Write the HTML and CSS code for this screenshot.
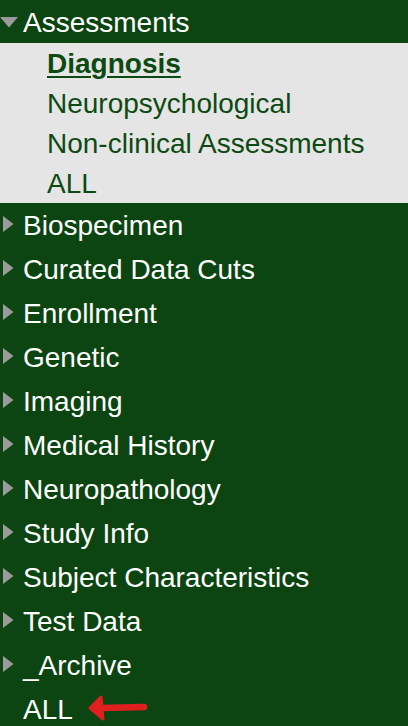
FILE: index.html
```html
<!DOCTYPE html>
<html lang="en">
<head>
<meta charset="utf-8">
<title>Tree</title>
<link rel="stylesheet" href="styles.css">
</head>
<body>
<ul class="tree">
  <li class="node open">
    <div class="row head">
      <span class="caret"><svg width="18" height="11" viewBox="0 0 18 11"><polygon points="0,0 18,0 9,10.5" fill="#9b9b9b"/></svg></span>
      <span class="label">Assessments</span>
    </div>
    <ul class="children">
      <li class="sub"><a class="active">Diagnosis</a></li>
      <li class="sub">Neuropsychological</li>
      <li class="sub">Non-clinical Assessments</li>
      <li class="sub">ALL</li>
    </ul>
  </li>
  <li class="node"><div class="row"><span class="caret"><svg width="11" height="16" viewBox="0 0 11 16"><polygon points="0,0 10.5,8 0,16" fill="#9b9b9b"/></svg></span><span class="label">Biospecimen</span></div></li>
  <li class="node"><div class="row"><span class="caret"><svg width="11" height="16" viewBox="0 0 11 16"><polygon points="0,0 10.5,8 0,16" fill="#9b9b9b"/></svg></span><span class="label">Curated Data Cuts</span></div></li>
  <li class="node"><div class="row"><span class="caret"><svg width="11" height="16" viewBox="0 0 11 16"><polygon points="0,0 10.5,8 0,16" fill="#9b9b9b"/></svg></span><span class="label">Enrollment</span></div></li>
  <li class="node"><div class="row"><span class="caret"><svg width="11" height="16" viewBox="0 0 11 16"><polygon points="0,0 10.5,8 0,16" fill="#9b9b9b"/></svg></span><span class="label">Genetic</span></div></li>
  <li class="node"><div class="row"><span class="caret"><svg width="11" height="16" viewBox="0 0 11 16"><polygon points="0,0 10.5,8 0,16" fill="#9b9b9b"/></svg></span><span class="label">Imaging</span></div></li>
  <li class="node"><div class="row"><span class="caret"><svg width="11" height="16" viewBox="0 0 11 16"><polygon points="0,0 10.5,8 0,16" fill="#9b9b9b"/></svg></span><span class="label">Medical History</span></div></li>
  <li class="node"><div class="row"><span class="caret"><svg width="11" height="16" viewBox="0 0 11 16"><polygon points="0,0 10.5,8 0,16" fill="#9b9b9b"/></svg></span><span class="label">Neuropathology</span></div></li>
  <li class="node"><div class="row"><span class="caret"><svg width="11" height="16" viewBox="0 0 11 16"><polygon points="0,0 10.5,8 0,16" fill="#9b9b9b"/></svg></span><span class="label">Study Info</span></div></li>
  <li class="node"><div class="row"><span class="caret"><svg width="11" height="16" viewBox="0 0 11 16"><polygon points="0,0 10.5,8 0,16" fill="#9b9b9b"/></svg></span><span class="label">Subject Characteristics</span></div></li>
  <li class="node"><div class="row"><span class="caret"><svg width="11" height="16" viewBox="0 0 11 16"><polygon points="0,0 10.5,8 0,16" fill="#9b9b9b"/></svg></span><span class="label">Test Data</span></div></li>
  <li class="node"><div class="row"><span class="caret"><svg width="11" height="16" viewBox="0 0 11 16"><polygon points="0,0 10.5,8 0,16" fill="#9b9b9b"/></svg></span><span class="label">_Archive</span></div></li>
  <li class="node"><div class="row"><span class="caret"></span><span class="label">ALL</span>
    <svg class="pointer" width="62" height="28" viewBox="0 0 62 28"><line x1="14" y1="14" x2="57" y2="13" stroke="#e0201e" stroke-width="6.5" stroke-linecap="round"/><polygon points="3,14 14,3 16,25" fill="#e0201e" stroke="#e0201e" stroke-width="3" stroke-linejoin="round"/></svg>
  </div></li>
</ul>
</body>
</html>
```

FILE: styles.css
```css
html, body {
  margin: 0;
  padding: 0;
  background: #0c4511;
}
body {
  font-family: "Liberation Sans", Arial, sans-serif;
  font-size: 28px;
  color: #ffffff;
}
.tree, .children {
  list-style: none;
  margin: 0;
  padding: 0;
}
.row {
  display: flex;
  align-items: center;
  height: 44px;
  white-space: nowrap;
}
.row.head {
  height: 43px;
}
.caret {
  width: 23px;
  flex: none;
  display: flex;
  align-items: center;
  padding-left: 3px;
  box-sizing: border-box;
  margin-top: -2px;
}
.head .caret {
  padding-left: 0;
  margin-top: 1px;
}
.label {
  line-height: 1;
  padding-top: 2px;
}
.children {
  background: #e5e5e5;
  padding: 0;
}
.sub {
  height: 40px;
  display: flex;
  align-items: center;
  padding-left: 47px;
  padding-top: 2px;
  box-sizing: border-box;
  color: #0d4a12;
  white-space: nowrap;
  line-height: 1;
}
.sub .active {
  font-weight: bold;
  text-decoration: underline;
  text-decoration-thickness: 2px;
  text-underline-offset: 3px;
}
.pointer {
  margin-left: 14px;
  flex: none;
  margin-top: -2px;
}
```
